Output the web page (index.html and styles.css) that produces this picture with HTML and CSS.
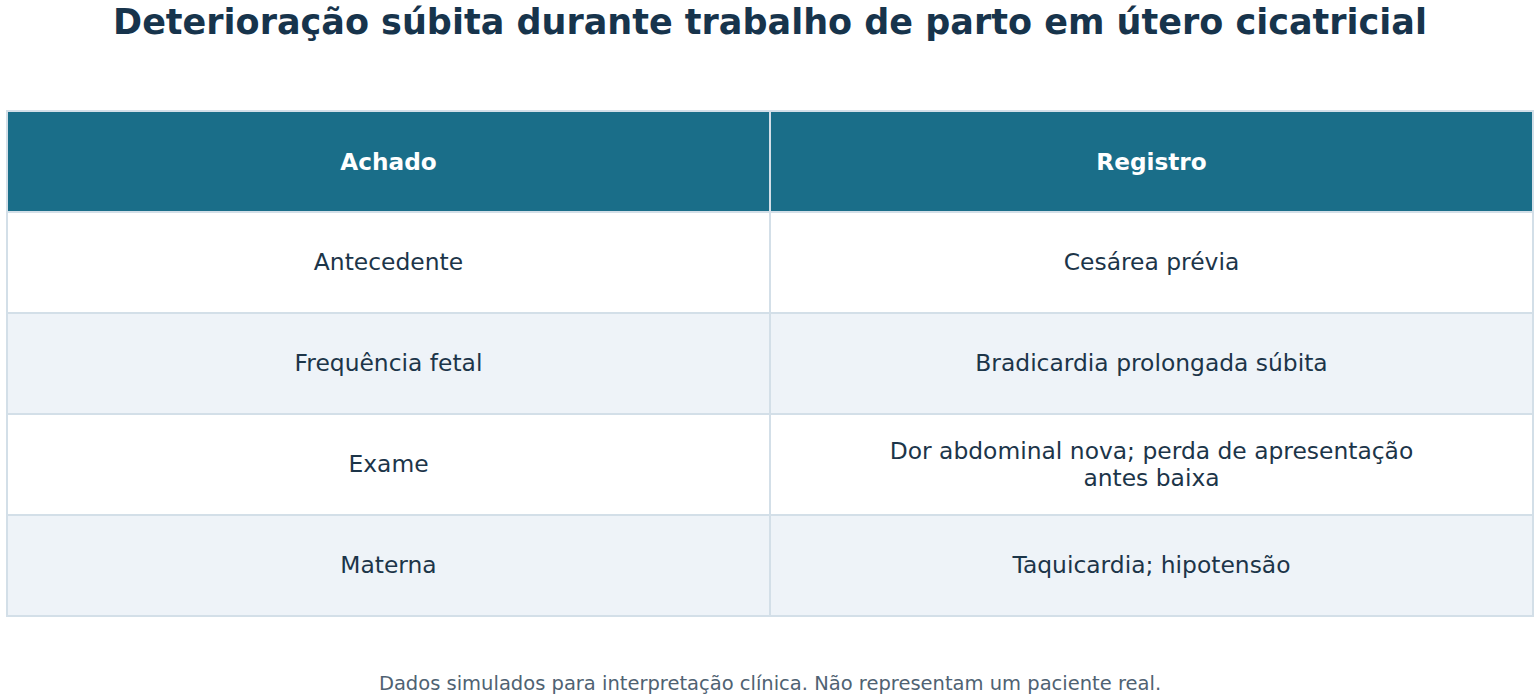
FILE: index.html
```html
<!DOCTYPE html>
<html lang="pt">
<head>
<meta charset="utf-8">
<title>Deterioração súbita</title>
<link rel="stylesheet" href="styles.css">
</head>
<body>
<div class="page">
  <h1 class="title">Deterioração súbita durante trabalho de parto em útero cicatricial</h1>
  <table class="grid">
    <thead>
      <tr><th>Achado</th><th>Registro</th></tr>
    </thead>
    <tbody>
      <tr><td>Antecedente</td><td>Cesárea prévia</td></tr>
      <tr class="alt"><td>Frequência fetal</td><td>Bradicardia prolongada súbita</td></tr>
      <tr><td>Exame</td><td>Dor abdominal nova; perda de apresentação antes baixa</td></tr>
      <tr class="alt"><td>Materna</td><td>Taquicardia; hipotensão</td></tr>
    </tbody>
  </table>
  <p class="note">Dados simulados para interpretação clínica. Não representam um paciente real.</p>
</div>
</body>
</html>
```

FILE: styles.css
```css
html, body {
  margin: 0;
  padding: 0;
  background: #ffffff;
}
.page {
  padding: 0 6px;
  font-family: "DejaVu Sans", Verdana, sans-serif;
  color: #1c3549;
}
.title {
  margin: 0;
  height: 110px;
  font-size: 35px;
  font-weight: bold;
  line-height: 44px;
  text-align: center;
  color: #17344c;
}
.grid {
  width: 100%;
  border-collapse: collapse;
  table-layout: fixed;
  border: 2px solid #d3dfe8;
}
.grid th, .grid td {
  border: 2px solid #d3dfe8;
  height: 99px;
  padding: 0 95px;
  text-align: center;
  vertical-align: middle;
  font-size: 23.4px;
  line-height: 27px;
}
.grid th {
  background: #1a6e89;
  color: #ffffff;
  font-weight: bold;
  font-size: 23.2px;
}
.grid td {
  background: #ffffff;
  color: #1c3549;
}
.grid tr.alt td {
  background: #eef3f8;
}
.note {
  margin: 0;
  padding-top: 55px;
  text-align: center;
  font-size: 19.5px;
  color: #4f6272;
}
```
